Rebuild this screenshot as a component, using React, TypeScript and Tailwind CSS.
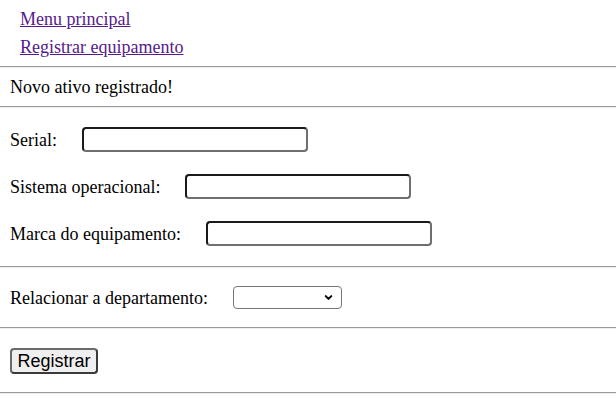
import { ChevronDown } from 'lucide-react';

function Divider() {
  return <div className="h-[2px] w-full border-t border-t-[#9a9a9a] border-b border-b-[#eeeeee]" />;
}

function Field({ label }: { label: string }) {
  return (
    <div className="flex items-center gap-[25px] h-[25px]">
      <span>{label}</span>
      <div className="w-[226px] h-[25px] rounded-[4px] border-2 border-t-[#1a1a1a] border-l-[#1a1a1a] border-r-[#6f6f6f] border-b-[#6f6f6f] bg-white" />
    </div>
  );
}

export default function App() {
  return (
    <div className="bg-white w-[616px] h-[415px] text-black text-[18px] leading-[20px] font-['Liberation_Serif',serif]">
      {/* Nav links */}
      <div className="flex flex-col gap-[8px] pl-[20px] pt-[9px] pb-[9px]">
        <a href="#" className="text-[#551a8b] underline w-fit">Menu principal</a>
        <a href="#" className="text-[#551a8b] underline w-fit">Registrar equipamento</a>
      </div>
      <Divider />

      <div className="px-[10px] py-[9px]">Novo ativo registrado!</div>
      <Divider />

      {/* Inputs */}
      <div className="flex flex-col gap-[22px] px-[10px] pt-[19px] pb-[20px]">
        <Field label="Serial:" />
        <Field label="Sistema operacional:" />
        <Field label="Marca do equipamento:" />
      </div>
      <Divider />

      <div className="flex items-center gap-[25px] px-[10px] pt-[18px] pb-[18px]">
        <span>Relacionar a departamento:</span>
        <div className="w-[109px] h-[23px] rounded-[4px] border border-[#767676] bg-white flex items-center justify-end pr-[7px]">
          <ChevronDown size={11} strokeWidth={4.5} className="text-black" />
        </div>
      </div>
      <Divider />

      <div className="px-[10px] pt-[19px] pb-[18px]">
        <button className="h-[26px] w-[88px] rounded-[4px] border-2 border-[#3a3a3a] border-t-[#6a6a6a] border-l-[#6a6a6a] bg-[#efefef] text-[18px] leading-[20px] font-['Liberation_Sans',Arial,sans-serif] text-black">
          Registrar
        </button>
      </div>
      <Divider />
    </div>
  );
}
